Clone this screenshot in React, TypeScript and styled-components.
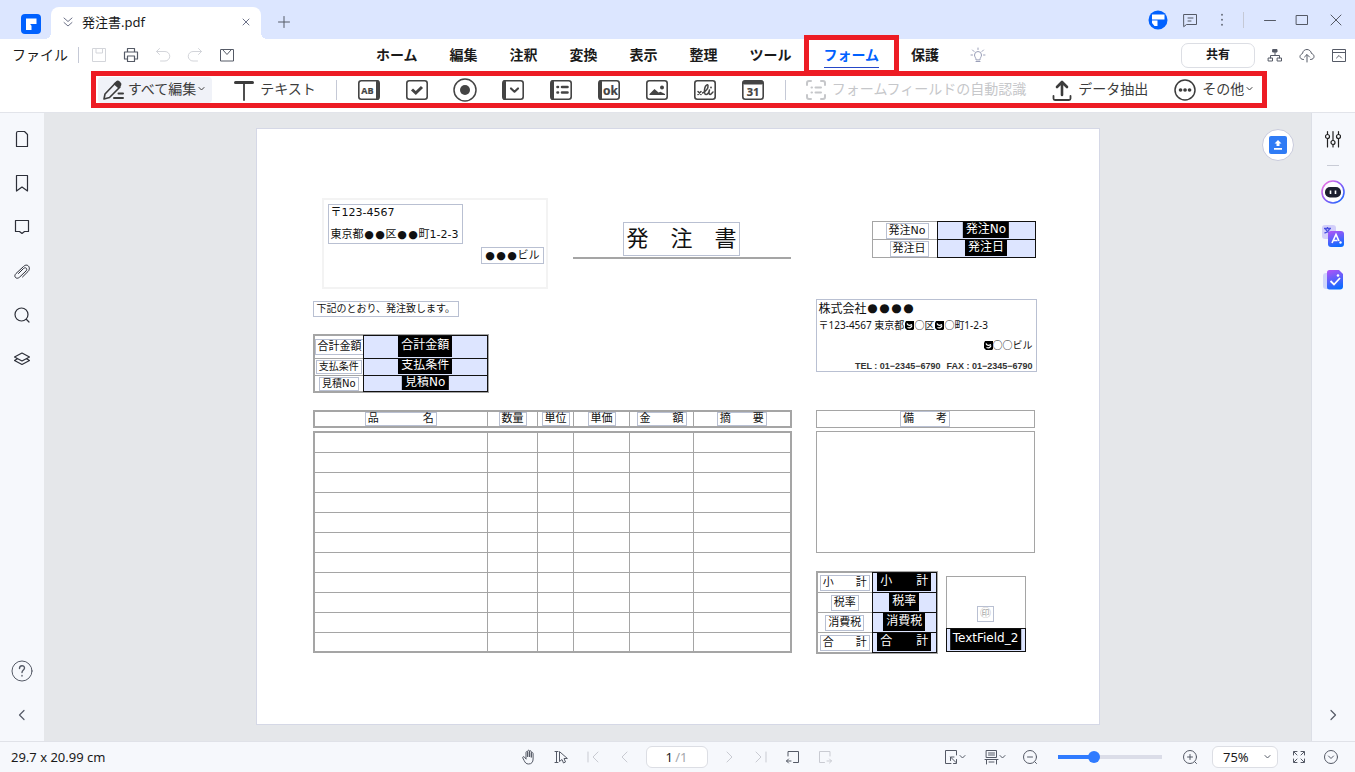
import React from 'react';
import styled, { createGlobalStyle, css } from 'styled-components';

const RED = '#ed1c24';
const BLUE = '#0061ff';
const INK = '#1a1a1a';
const RULE = '#a5a5a5';
const OUTLINE = '#b9c0d2';
const FIELD = '#dde5ff';
const ui = `"Noto Sans", "Noto Sans CJK JP", sans-serif`;
const doc = `"DejaVu Sans", "Noto Sans CJK JP", sans-serif`;
const cjk = `"Noto Sans CJK JP", sans-serif`;

const GlobalStyle = createGlobalStyle`
  *, *::before, *::after { box-sizing: border-box; }
  body { margin: 0; font-family: ${ui}; font-size: 13px; color: ${INK}; background: #f6f8fc; }
  button, input, select { font: inherit; color: inherit; }
  svg { display: block; flex: none; }
`;

const Window = styled.div`
  min-height: 100vh;
  display: flex;
  flex-direction: column;
`;

/* ---------- shared controls ---------- */

const IconButton = styled.button<{ $w?: number; $h?: number; $color?: string }>`
  display: flex;
  align-items: center;
  justify-content: center;
  flex: none;
  width: ${(p) => p.$w ?? 32}px;
  height: ${(p) => p.$h ?? 24}px;
  padding: 0;
  border: 0;
  background: none;
  color: ${(p) => p.$color ?? '#555a66'};
`;

const Divider = styled.span<{ $h?: number }>`
  flex: none;
  width: 1px;
  height: ${(p) => p.$h ?? 16}px;
  background: #c5c9d6;
`;

type SvgProps = { size?: number; w?: number; sw?: number; children: React.ReactNode };
const Svg = ({ size = 16, w, sw = 1, children }: SvgProps) => (
  <svg
    width={w ?? size}
    height={size}
    viewBox={`0 0 ${w ?? size} ${size}`}
    fill="none"
    stroke="currentColor"
    strokeWidth={sw}
    strokeLinecap="round"
    strokeLinejoin="round"
    aria-hidden="true"
  >
    {children}
  </svg>
);

/* ---------- title bar ---------- */

const TitleBar = styled.header`
  display: flex;
  align-items: flex-end;
  height: 39px;
  padding-left: 21px;
  background: #dce6ff;
`;

const AppLogo = styled.div`
  margin: 0 10px 5px 0;
`;

const FileTab = styled.div`
  position: relative;
  display: flex;
  align-items: center;
  width: 210px;
  height: 32px;
  padding: 0 10px 2px 12px;
  border-radius: 8px 8px 0 0;
  background: #fff;
  > svg { color: #6d7288; }
  &::before, &::after {
    content: '';
    position: absolute;
    bottom: 0;
    width: 6px;
    height: 6px;
  }
  &::before { left: -6px; background: radial-gradient(circle at 0 0, transparent 6px, #fff 6px); }
  &::after { right: -6px; background: radial-gradient(circle at 100% 0, transparent 6px, #fff 6px); }
`;

const FileName = styled.span`
  flex: 1;
  margin-left: 9px;
  line-height: 20px;
`;

const NewTab = styled(IconButton)`
  margin: 0 0 5px 12px;
`;

const WindowControls = styled.div`
  display: flex;
  align-items: center;
  height: 39px;
  margin-left: auto;
  padding-right: 4px;
  > ${Divider} { margin: 0 12px 0 5px; }
`;

/* ---------- menu row ---------- */

const MenuRow = styled.div`
  display: grid;
  grid-template-columns: 1fr auto 1fr;
  align-items: center;
  height: 32px;
  background: #fff;
`;

const QuickBar = styled.div`
  display: flex;
  align-items: center;
  padding-left: 12px;
`;

const FileMenu = styled.button`
  padding: 0;
  margin-right: 10px;
  border: 0;
  background: none;
  font-size: 14px;
  line-height: 20px;
`;

const QuickIcons = styled.div`
  display: flex;
  margin-left: 4px;
`;

const Tabs = styled.nav`
  display: flex;
  gap: 32px;
  height: 100%;
  padding-left: 6px;
`;

const TabButton = styled.button<{ $active?: boolean }>`
  position: relative;
  height: 100%;
  padding: 0;
  border: 0;
  background: none;
  font-size: 14px;
  font-weight: 700;
  line-height: 20px;
  ${(p) =>
    p.$active &&
    css`
      color: ${BLUE};
      &::after {
        content: '';
        position: absolute;
        left: 0;
        right: 0;
        bottom: 3px;
        height: 1px;
        background: #2547c8;
      }
    `}
`;

const TabHighlight = styled.span`
  position: absolute;
  inset: -4px -20px;
  border: 5px solid ${RED};
  pointer-events: none;
`;

const AccountBar = styled.div`
  display: flex;
  align-items: center;
  justify-content: flex-end;
`;

const ShareButton = styled.button`
  width: 74px;
  height: 25px;
  margin-right: 4px;
  padding: 0 0 2px;
  border: 1px solid #dcdee4;
  border-radius: 7px;
  background: #fff;
  font-size: 12px;
  font-weight: 700;
`;

/* ---------- form toolbar ---------- */

const ToolbarRow = styled.div`
  display: flex;
  justify-content: center;
  padding: 0 0 4px 3px;
  border-bottom: 1px solid #e2e4ea;
  background: #fff;
`;

const Toolbar = styled.div`
  display: flex;
  align-items: center;
  gap: 20px;
  height: 37px;
  padding: 0 9px 0 2px;
  border: 5px solid ${RED};
`;

const ToolGroup = styled.div<{ $gap: number }>`
  display: flex;
  align-items: center;
  gap: ${(p) => p.$gap}px;
`;

const ToolButton = styled.button<{ $selected?: boolean }>`
  display: flex;
  align-items: center;
  gap: ${(p) => (p.$selected ? 4 : 6)}px;
  height: 26px;
  padding: ${(p) => (p.$selected ? '0 7px 0 5px' : '0')};
  border: 0;
  border-radius: 4px;
  background: ${(p) => (p.$selected ? '#f0f2f8' : 'none')};
  color: #3c3c3c;
  font-size: 14px;
  line-height: 20px;
  white-space: nowrap;
  &:disabled { color: #c6c7ca; }
`;

const ToolLabel = styled.span`
  display: flex;
  align-items: center;
  gap: 2px;
  padding-bottom: 1px;
`;

/* ---------- work area ---------- */

const WorkArea = styled.main`
  flex: 1;
  display: flex;
`;

const SideRail = styled.aside<{ $right?: boolean }>`
  display: flex;
  flex-direction: column;
  align-items: center;
  flex: none;
  width: 44px;
  padding: 4px ${(p) => (p.$right ? 1 : 0)}px 4px 0;
  background: #f6f8fc;
  color: #333;
  border-left: ${(p) => (p.$right ? '1px solid #dcdfe6' : '0')};
`;

const RailSpacer = styled.div`
  flex: 1;
`;

const RailRule = styled.span`
  width: 12px;
  height: 1px;
  margin: 4px 0;
  background: #c9ccd6;
`;

const Canvas = styled.section`
  position: relative;
  flex: 1;
  display: flex;
  justify-content: center;
  align-items: flex-start;
  padding: 15px 0;
  background: #e5e7ea;
`;

const UploadButton = styled.button`
  position: absolute;
  top: 16px;
  right: 17px;
  display: flex;
  align-items: center;
  justify-content: center;
  width: 32px;
  height: 32px;
  padding: 0;
  border: 1px solid #c9cbdc;
  border-radius: 50%;
  background: #fff;
`;

/* ---------- the order form ---------- */

const Sheet = styled.article`
  display: flex;
  gap: 25px;
  width: 844px;
  min-height: 597px;
  padding: 69px 64px 64px 56px;
  border: 1px solid #d5d8e6;
  background: #fff;
  color: #111;
  font-family: ${doc};
  font-size: 11px;
  line-height: 14px;
`;

const LeftColumn = styled.div`
  flex: 1;
  display: flex;
  flex-direction: column;
  min-width: 0;
`;

const RightColumn = styled.div`
  display: flex;
  flex-direction: column;
  flex: none;
  width: 219px;
  padding-top: 23px;
`;

const SheetHead = styled.div`
  display: flex;
  justify-content: space-between;
  align-items: flex-start;
  padding-left: 9px;
`;

const AddressFrame = styled.div`
  display: flex;
  flex-direction: column;
  width: 226px;
  height: 91px;
  padding: 4px 2px 4px 4px;
  border: 2px solid #f3f3f3;
`;

const TextBlock = styled.div`
  width: fit-content;
  border: 1px solid ${OUTLINE};
  white-space: nowrap;
`;

const Recipient = styled(TextBlock)`
  padding: 1px 4px 1px 2px;
  p { margin: 0 0 8px; }
  p:last-child { margin: 0; }
`;

const Building = styled(TextBlock)`
  align-self: flex-end;
  margin-top: 3px;
  padding: 0 3px;
  line-height: 15px;
`;

const Mark = styled.span`
  font-family: ${cjk};
`;

/* a solid circle centred in a full-width cell */
const Dot = styled.span`
  display: inline-block;
  width: 1em;
  text-align: center;
  font-family: ${doc};
`;

const TitleRule = styled.div`
  display: flex;
  justify-content: center;
  width: 218px;
  margin-top: 24px;
  padding-bottom: 1px;
  border-bottom: 2px solid ${RULE};
`;

const SheetTitle = styled.h1`
  margin: 0;
  padding: 0 2px;
  border: 1px solid ${OUTLINE};
  font-size: 22px;
  font-weight: 400;
  line-height: 32px;
  white-space: nowrap;
`;

const Notice = styled(TextBlock)`
  margin: 12px 0 17px;
  padding: 0 3px;
  font-size: 10px;
`;

const FieldTable = styled.table<{ $width: number; $line?: number; $indent?: number }>`
  width: ${(p) => p.$width}px;
  margin-left: ${(p) => p.$indent ?? 0}px;
  table-layout: fixed;
  border-collapse: collapse;
  border: ${(p) => p.$line ?? 1}px solid ${RULE};
`;

const LabelCell = styled.th<{ $h: number; $end?: boolean }>`
  height: ${(p) => p.$h}px;
  padding: 0 ${(p) => (p.$end ? 8 : 0)}px 0 0;
  border: 1px solid ${RULE};
  font-weight: 400;
  text-align: ${(p) => (p.$end ? 'right' : 'center')};
  vertical-align: middle;
  line-height: 0;
`;

const Caption = styled.label<{ $small?: boolean; $tight?: boolean }>`
  display: inline-block;
  padding: 0 2px;
  border: 1px solid ${OUTLINE};
  font-size: ${(p) => (p.$small ? 10 : 11)}px;
  line-height: ${(p) => (p.$small || p.$tight ? 12 : 14)}px;
  white-space: pre;
  vertical-align: middle;
`;

const FieldCell = styled.td<{ $h: number }>`
  height: ${(p) => p.$h}px;
  padding: 0;
  border: 1px solid #000;
`;

const FieldFrame = styled.div<{ $h: number }>`
  position: relative;
  height: ${(p) => p.$h}px;
  box-shadow: 0 0 0 1px #111;
`;

const FieldInput = styled.input`
  display: block;
  width: 100%;
  height: 100%;
  padding: 0;
  border: 0;
  border-radius: 0;
  background: ${FIELD};
`;

const FieldTag = styled.span`
  position: absolute;
  top: 0;
  bottom: 1px;
  left: 50%;
  display: flex;
  align-items: center;
  padding: 0 3px 3px;
  overflow: hidden;
  background: #000;
  color: #fff;
  font-size: 12px;
  line-height: 14px;
  white-space: pre;
  transform: translateX(-50%);
  pointer-events: none;
`;

const ItemTable = styled.table`
  width: 478px;
  table-layout: fixed;
  border-collapse: collapse;
  border: 2px solid ${RULE};
  th, td {
    padding: 0;
    border: 1px solid ${RULE};
    font-weight: 400;
  }
  th { height: 16px; line-height: 0; }
  td { height: 20px; }
  ${FieldTable} + & { margin-top: 17px; }
  & + & { margin-top: 3px; }
`;

const Company = styled.div`
  width: 221px;
  margin: 41px 0 38px;
  padding: 1px 3px 0 2px;
  border: 1px solid ${OUTLINE};
  font-family: ${ui};
  font-size: 10px;
  line-height: 12px;
  white-space: nowrap;
  p { margin: 0; display: flex; align-items: center; }
`;

const CompanyName = styled.p`
  font-size: 12px;
  line-height: 15px;
`;

const CompanyLine = styled.p<{ $end?: boolean }>`
  && { margin-top: ${(p) => (p.$end ? 8 : 3)}px; }
  justify-content: ${(p) => (p.$end ? 'flex-end' : 'flex-start')};
`;

const Phone = styled.p`
  && { margin-top: 11px; }
  justify-content: flex-end;
  gap: 6px;
  color: #333;
  font-family: "Liberation Sans", ${cjk};
  font-size: 9px;
  font-weight: 700;
  line-height: 9px;
`;

const RemarksHead = styled.div`
  display: flex;
  justify-content: center;
  height: 18px;
  border: 1px solid ${RULE};
`;

const Remarks = styled.textarea`
  display: block;
  width: 100%;
  height: 122px;
  margin: 3px 0 18px;
  border: 1px solid ${RULE};
  border-radius: 0;
  background: #fff;
  resize: none;
`;

const Summary = styled.div`
  display: flex;
  gap: 8px;
`;

const Stamp = styled.div`
  flex: none;
  width: 80px;
  margin-top: 5px;
`;

const StampArea = styled.div`
  display: flex;
  justify-content: center;
  align-items: flex-end;
  height: 52px;
  padding-bottom: 6px;
  border: 1px solid ${RULE};
  border-bottom: 0;
  color: #aaa;
  font-size: 10px;
  line-height: 16px;
`;

const StampField = styled.div`
  height: 24px;
  padding: 1px;
`;

/* ---------- status bar ---------- */

const StatusBar = styled.footer`
  display: grid;
  grid-template-columns: 1fr auto 1fr;
  align-items: center;
  height: 31px;
  padding: 0 8px 0 11px;
  border-top: 1px solid #e0e2e8;
  background: #f6f8fc;
`;

const StatusGroup = styled.div<{ $end?: boolean }>`
  display: flex;
  align-items: center;
  justify-content: ${(p) => (p.$end ? 'flex-end' : 'center')};
  margin-right: ${(p) => (p.$end ? 0 : 4)}px;
`;

const PageBox = styled.label`
  display: flex;
  align-items: center;
  width: 62px;
  height: 22px;
  margin: 0 5px;
  border: 1px solid #dcdee4;
  border-radius: 6px;
  background: #fff;
  color: #a4a6ac;
`;

const PageInput = styled.input`
  width: 26px;
  padding: 0;
  border: 0;
  background: none;
  color: ${INK};
  text-align: right;
`;

const ZoomRange = styled.input`
  appearance: none;
  width: 104px;
  height: 12px;
  margin: 0 12px;
  background: linear-gradient(to right, #2f7bff 36px, #dbdde8 36px) center / 100% 4px no-repeat;
  &::-webkit-slider-thumb {
    appearance: none;
    width: 12px;
    height: 12px;
    border-radius: 50%;
    background: #2f7bff;
  }
`;

const ZoomBox = styled.div`
  position: relative;
  margin: 0 5px 0 6px;
  svg { position: absolute; top: 8px; right: 7px; color: #555a66; pointer-events: none; }
`;

const ZoomSelect = styled.select`
  appearance: none;
  display: block;
  width: 66px;
  height: 22px;
  padding: 0 0 0 10px;
  border: 1px solid #dcdee4;
  border-radius: 6px;
  background: #fff;
`;

/* ---------- glyphs ---------- */

const Caret = ({ w = 7 }: { w?: number }) => (
  <Svg size={6} w={w}>
    <path d={`M1 1.500 L${w / 2} 4 L${w - 1} 1.500`} />
  </Svg>
);

const Logo = () => (
  <svg width="20" height="20" viewBox="0 0 20 20" aria-hidden="true">
    <rect width="20" height="20" rx="4" fill="#0061ff" />
    <path d="M5 4.500h10.500v5.500H10v1.500H5z M5 11.500h5.500v4.500H5z" fill="#fff" />
    <path d="M9.500 10.500h6" stroke="#0061ff" />
  </svg>
);

const RoundLogo = () => (
  <svg width="20" height="20" viewBox="0 0 20 20" aria-hidden="true">
    <circle cx="10" cy="10" r="9.500" fill="#0061ff" />
    <path d="M4 4.500h12.500v5H4z M4 10.500h5.500v5.500H6.500L4 13z" fill="#fff" />
  </svg>
);

const ToolFrame = ({ children, bar }: { children: React.ReactNode; bar?: 'left' | 'right' | 'top' }) => (
  <svg width="24" height="24" viewBox="0 0 24 24" fill="none" stroke="#444" strokeWidth="1.600" strokeLinecap="round" strokeLinejoin="round" aria-hidden="true">
    <rect x="1.800" y="2.800" width="20.400" height="18.400" rx="2.500" />
    {bar === 'left' && <path d="M3.500 3.500v17" strokeWidth="3" />}
    {bar === 'right' && <path d="M20.500 3.500v17" strokeWidth="3" />}
    {bar === 'top' && <path d="M3.500 4.500h17" strokeWidth="4" />}
    {children}
  </svg>
);

const svgText = { fill: '#444', stroke: '#444', strokeWidth: 0.2, fontWeight: 700, textAnchor: 'middle' as const };

const fieldTools: { name: string; icon: React.ReactNode }[] = [
  {
    name: 'テキストフィールド',
    icon: (
      <ToolFrame bar="right">
        <text x="10.500" y="15.500" fontSize="9" fontFamily="Open Sans, sans-serif" {...svgText}>AB</text>
      </ToolFrame>
    ),
  },
  { name: 'チェックボックス', icon: <ToolFrame><path d="M7 11.500l3.800 3.500 6.200-6" strokeWidth="3" strokeLinecap="butt" strokeLinejoin="miter" /></ToolFrame> },
  {
    name: 'ラジオボタン',
    icon: (
      <svg width="24" height="24" viewBox="0 0 24 24" aria-hidden="true">
        <circle cx="12" cy="12" r="11" fill="none" stroke="#444" strokeWidth="1.500" />
        <circle cx="12" cy="12" r="5" fill="#444" />
      </svg>
    ),
  },
  { name: 'コンボボックス', icon: <ToolFrame bar="left"><path d="M10 10.500l3.500 3.200 3.500-3.200" strokeWidth="2.200" /></ToolFrame> },
  { name: 'リストボックス', icon: <ToolFrame bar="left"><path d="M8.500 9h.5M13 9h5.500M8.500 14.500h.5M13 14.500h5.500" strokeWidth="2.600" /></ToolFrame> },
  {
    name: 'プッシュボタン',
    icon: (
      <ToolFrame bar="left">
        <text x="13.500" y="16.500" fontSize="12" fontFamily="Open Sans, sans-serif" {...svgText}>ok</text>
      </ToolFrame>
    ),
  },
  {
    name: '画像フィールド',
    icon: (
      <ToolFrame>
        <path d="M4.500 17v-1l5-5 4 3.500 2-.8 4.500 2.300v1z" fill="#444" stroke="none" />
        <circle cx="17" cy="9.500" r="2" fill="#444" stroke="none" />
      </ToolFrame>
    ),
  },
  {
    name: '署名フィールド',
    icon: (
      <ToolFrame>
        <path d="M5 13.500l3 3M8 13.500l-3 3" strokeWidth="1.500" />
        <path d="M9.500 15c3.500-1.500 6-5 5.500-7.500-.3-1.500-2.500-.5-3.200 2.500-.8 3.500-.3 6.500 1.200 6.500s3-2.500 3.500-4.500c-.8 2.500-.5 4.500.5 4.500s1.800-1.500 3-2.500" strokeWidth="1.500" />
        <path d="M18 9.500v.1" strokeWidth="1.800" />
      </ToolFrame>
    ),
  },
  {
    name: '日付フィールド',
    icon: (
      <ToolFrame bar="top">
        <text x="12" y="18" fontSize="11" fontFamily="Open Sans, sans-serif" {...svgText}>31</text>
      </ToolFrame>
    ),
  },
];

const leftRail: { name: string; icon: React.ReactNode }[] = [
  { name: 'ページ', icon: <path d="M4 1.500h6.500l3 3v12H2.500V3A1.500 1.500 0 0 1 4 1.500z" /> },
  { name: 'しおり', icon: <path d="M2.500 1.500h11v15.500L8 13l-5.500 4z" /> },
  { name: '注釈', icon: <path d="M1.500 2.500h13v11h-4L8 15.500l-2.500-2h-4z" /> },
  { name: '添付ファイル', icon: <path d="M8.500 15L14 9.500C17.500 6 13.500 .5 9.500 4.500L2 11.500c-3 3 .5 6.500 3.500 3.700L12 9c2-2-.3-4.500-2.500-2.500L4.500 11.500" strokeWidth="1" /> },
  { name: '検索', icon: <path d="M7.500 2a6.500 6.500 0 1 1 0 13a6.500 6.500 0 1 1 0-13zM12.500 13.500l2.500 2.500" /> },
  { name: 'レイヤー', icon: <path d="M8 3l7.500 4L8 11 .5 7zM3 9L.5 10.500 8 14.500l7.500-4L13 9" /> },
];

const tabs = ['ホーム', '編集', '注釈', '変換', '表示', '整理', 'ツール', 'フォーム', '保護'];

const columnWidths = [174, 50, 36, 56, 64, 97];
const columnNames = ['品　　　　名', '数量', '単位', '単価', '金　　額', '摘　　要'];

const Cols = ({ widths }: { widths: number[] }) => (
  <colgroup>
    {widths.map((w, i) => (
      <col key={i} width={w} />
    ))}
  </colgroup>
);

const Dots = ({ n }: { n: number }) => (
  <>
    {Array.from({ length: n }, (_, i) => (
      <Dot key={i}>●</Dot>
    ))}
  </>
);

type Row = { id: string; label: string; h: number; small?: boolean };

const FieldRows = ({ rows, end }: { rows: Row[]; end?: boolean }) => (
  <tbody>
    {rows.map((r) => (
      <tr key={r.id}>
        <LabelCell scope="row" $h={r.h} $end={end}>
          <Caption htmlFor={r.id} $small={r.small}>{r.label}</Caption>
        </LabelCell>
        <FieldCell $h={r.h}>
          <FieldFrame $h={r.h - 1}>
            <FieldInput id={r.id} />
            <FieldTag>{r.label}</FieldTag>
          </FieldFrame>
        </FieldCell>
      </tr>
    ))}
  </tbody>
);

const Smudge = () => (
  <svg width="10" height="11" viewBox="0 0 10 11" aria-hidden="true">
    <path d="M2 1h8v8l-1 1H3L1 8V3z" fill="#000" />
    <path d="M3 3.500c1 2.500 3 2 5 1M3.500 7.500c2 1 4 0 4.500-2" stroke="#fff" strokeWidth="1.200" fill="none" />
  </svg>
);

const OrderForm = () => (
  <Sheet>
    <LeftColumn>
      <SheetHead>
        <AddressFrame>
          <Recipient>
            <p>〒123-4567</p>
            <p>東京都<Dots n={2} />区<Dots n={2} />町1-2-3</p>
          </Recipient>
          <Building><Dots n={3} />ビル</Building>
        </AddressFrame>
        <TitleRule>
          <SheetTitle>発　注　書</SheetTitle>
        </TitleRule>
      </SheetHead>
      <Notice>下記のとおり、発注致します。</Notice>
      <FieldTable $width={175} $line={2}>
        <Cols widths={[50, 124]} />
        <FieldRows
          rows={[
            { id: 'amount', label: '合計金額', h: 23 },
            { id: 'terms', label: '支払条件', h: 17, small: true },
            { id: 'quote', label: '見積No', h: 16, small: true },
          ]}
        />
      </FieldTable>
      <ItemTable>
        <Cols widths={columnWidths} />
        <thead>
          <tr>
            {columnNames.map((n) => (
              <th key={n} scope="col"><Caption as="span" $tight>{n}</Caption></th>
            ))}
          </tr>
        </thead>
      </ItemTable>
      <ItemTable>
        <Cols widths={columnWidths} />
        <tbody>
          {Array.from({ length: 11 }, (_, r) => (
            <tr key={r}>
              {columnWidths.map((_, c) => (
                <td key={c} />
              ))}
            </tr>
          ))}
        </tbody>
      </ItemTable>
    </LeftColumn>
    <RightColumn>
      <FieldTable $width={163} $indent={56}>
        <Cols widths={[65, 98]} />
        <FieldRows
          end
          rows={[
            { id: 'orderNo', label: '発注No', h: 18 },
            { id: 'orderDate', label: '発注日', h: 18 },
          ]}
        />
      </FieldTable>
      <Company>
        <CompanyName>株式会社<Dots n={4} /></CompanyName>
        <CompanyLine>
          〒123-4567&nbsp;東京都<Smudge /><Mark>○</Mark>区<Smudge /><Mark>○</Mark>町1-2-3
        </CompanyLine>
        <CompanyLine $end><Smudge /><Mark>○○</Mark>ビル</CompanyLine>
        <Phone>
          <span>TEL : 01−2345−6790</span>
          <span>FAX : 01−2345−6790</span>
        </Phone>
      </Company>
      <RemarksHead>
        <Caption htmlFor="remarks">備　　考</Caption>
      </RemarksHead>
      <Remarks id="remarks" />
      <Summary>
        <FieldTable $width={122} $line={2}>
          <Cols widths={[56, 64]} />
          <FieldRows
            rows={[
              { id: 'subtotal', label: '小　　計', h: 20 },
              { id: 'rate', label: '税率', h: 20 },
              { id: 'tax', label: '消費税', h: 20 },
              { id: 'total', label: '合　　計', h: 20 },
            ]}
          />
        </FieldTable>
        <Stamp>
          <StampArea><Caption as="span">㊞</Caption></StampArea>
          <StampField>
            <FieldFrame $h={22}>
              <FieldInput aria-label="TextField_2" />
              <FieldTag>TextField_2</FieldTag>
            </FieldFrame>
          </StampField>
        </Stamp>
      </Summary>
    </RightColumn>
  </Sheet>
);

export default function App() {
  return (
    <Window>
      <GlobalStyle />
      <TitleBar>
        <AppLogo><Logo /></AppLogo>
        <FileTab>
          <Svg size={12} w={10}><path d="M1 2l4 3.500L9 2M1 6.500L5 10l4-3.500" /></Svg>
          <FileName>発注書.pdf</FileName>
          <IconButton $w={10} $color="#6d7288" aria-label="タブを閉じる"><Svg size={8}><path d="M1 1l6 6M7 1L1 7" /></Svg></IconButton>
        </FileTab>
        <NewTab $w={22} aria-label="新しいタブ"><Svg size={12}><path d="M6 .5v11M.5 6h11" /></Svg></NewTab>
        <WindowControls>
          <IconButton aria-label="アカウント"><RoundLogo /></IconButton>
          <IconButton aria-label="フィードバック"><Svg><path d="M2 2.500h12.500v10H4.500L2 14.500zM6 6h5M6 9h3" /></Svg></IconButton>
          <IconButton aria-label="メニュー"><Svg><path d="M8 2.500v.500M8 7.500v.500M8 12.500v.500" strokeWidth="1.600" /></Svg></IconButton>
          <Divider $h={16} />
          <IconButton $w={28} aria-label="最小化"><Svg><path d="M2.500 8.500h11" /></Svg></IconButton>
          <IconButton $w={36} aria-label="最大化"><Svg size={14}><path d="M1.500 2.500h11v9h-11z" /></Svg></IconButton>
          <IconButton $w={31} aria-label="閉じる"><Svg size={12}><path d="M1 1l10 10M11 1L1 11" /></Svg></IconButton>
        </WindowControls>
      </TitleBar>

      <MenuRow>
        <QuickBar>
          <FileMenu>ファイル</FileMenu>
          <Divider />
          <QuickIcons>
            <IconButton $color="#d3d5da" aria-label="保存"><Svg><path d="M2 1.500h12.500v13h-13V2zM5 1.500V6h6.500V1.500" /></Svg></IconButton>
            <IconButton aria-label="印刷"><Svg sw={1.2}><path d="M4.500 5V1.500h7V5M4 12H1.500V5h13v7H12M4.500 9h7v5.500h-7z" /></Svg></IconButton>
            <IconButton $color="#d3d5da" aria-label="元に戻す"><Svg><path d="M4.500 1.500l-3 3 3 3M1.500 4.500H10a4.500 4.500 0 0 1 0 9.500H5.500" /></Svg></IconButton>
            <IconButton $color="#d3d5da" aria-label="やり直す"><Svg><path d="M11.500 1.500l3 3-3 3M14.500 4.500H6a4.500 4.500 0 0 0 0 9.500h4.500" /></Svg></IconButton>
            <IconButton aria-label="メール"><Svg><path d="M2 2.500h12.500v11.500h-13V3zM4 3l4 4.500L12 3" /></Svg></IconButton>
          </QuickIcons>
        </QuickBar>
        <Tabs>
          {tabs.map((t) => (
            <TabButton key={t} $active={t === 'フォーム'}>
              {t}
              {t === 'フォーム' && <TabHighlight />}
            </TabButton>
          ))}
          <IconButton $w={14} $h={32} $color="#9a9fb8" aria-label="ヒント">
            <Svg size={16}><path d="M6 12.500C6 10.500 4.500 10 4.500 8a3.500 3.500 0 0 1 7 0c0 2-1.500 2.500-1.500 4.500zM6 14.500h4M8 1v1.500M2.500 3l1.500 1.500M13.500 3L12 4.500M1 8h1.500M13.500 8H15" /></Svg>
          </IconButton>
        </Tabs>
        <AccountBar>
          <ShareButton>共有</ShareButton>
          <IconButton aria-label="組織"><Svg><path d="M6 2.500h4v2.500H6z" fill="currentColor" /><path d="M8 5v3.500M3.500 11V8.500h9V11M1.500 11h4v3h-4zM10.500 11h4v3h-4z" /></Svg></IconButton>
          <IconButton aria-label="クラウド"><Svg><path d="M4.500 12.500C2 12.500 1 11 1 9.500S2.500 7 3.500 6.500C4 3.500 6 2.500 8 2.500s4 1.500 4.500 4c1.500.5 2.500 1.500 2.500 3s-1 3-3.500 3M8 15V8M5.500 10L8 7.500l2.500 2.500" /></Svg></IconButton>
          <IconButton aria-label="折りたたむ"><Svg><path d="M2 2.500h12.500v12h-13V3zM1.500 5.500h13M5.500 11L8 8.500l2.500 2.500" /></Svg></IconButton>
        </AccountBar>
      </MenuRow>

      <ToolbarRow>
        <Toolbar>
          <ToolGroup $gap={22}>
            <ToolButton $selected>
              <Svg size={22} w={21} sw={1.6}>
                <path d="M1 20l1-5L12.500 4l4.500 4L6.500 18.500z" />
                <path d="M11.500 5L14 2.500c1-1 4.500 2 3.500 3.500L15.500 8.500z" fill="currentColor" />
                <path d="M15.500 14.500H20M11 19h9" strokeWidth="2" />
              </Svg>
              <ToolLabel>すべて編集<Caret /></ToolLabel>
            </ToolButton>
            <ToolButton>
              <Svg size={22} w={20}><path d="M1.500 3.500h17" strokeWidth="3" /><path d="M10 4v17" strokeWidth="1.800" /></Svg>
              <ToolLabel>テキスト</ToolLabel>
            </ToolButton>
          </ToolGroup>
          <Divider $h={20} />
          <ToolGroup $gap={24}>
            {fieldTools.map((t) => (
              <IconButton key={t.name} $w={24} aria-label={t.name}>{t.icon}</IconButton>
            ))}
          </ToolGroup>
          <Divider $h={20} />
          <ToolGroup $gap={26}>
            <ToolButton disabled>
              <Svg size={20} sw={2}>
                <path d="M1 5V3a2 2 0 0 1 2-2h2M15 1h2a2 2 0 0 1 2 2v2M19 15v2a2 2 0 0 1-2 2h-2M5 19H3a2 2 0 0 1-2-2v-2M5.500 7.500h.5M9.500 7.500H15M5.500 12.500h.5M9.500 12.500H15" />
              </Svg>
              <ToolLabel>フォームフィールドの自動認識</ToolLabel>
            </ToolButton>
            <ToolButton>
              <Svg size={22} w={20} sw={1.8}><path d="M1.500 17v2.500a1.500 1.500 0 0 0 1.500 1.500h14a1.500 1.500 0 0 0 1.500-1.500V17" /><path d="M10 16V3.500M5 8l5-5 5 5" strokeWidth="2.600" /></Svg>
              <ToolLabel>データ抽出</ToolLabel>
            </ToolButton>
            <ToolButton>
              <Svg size={22} sw={1.5}><circle cx="11" cy="11" r="10" /><path d="M6.500 11h.1M11 11h.1M15.500 11h.1" strokeWidth="3.600" /></Svg>
              <ToolLabel>その他<Caret /></ToolLabel>
            </ToolButton>
          </ToolGroup>
        </Toolbar>
      </ToolbarRow>

      <WorkArea>
        <SideRail>
          {leftRail.map((r) => (
            <IconButton key={r.name} $w={44} $h={44} $color="#2c2f38" aria-label={r.name}>
              <Svg size={18} w={16} sw={1.2}>{r.icon}</Svg>
            </IconButton>
          ))}
          <RailSpacer />
          <IconButton $w={44} $h={44} aria-label="ヘルプ">
            <Svg size={22}><circle cx="11" cy="11" r="10" /><path d="M8.500 8.500c0-3.500 5-3.500 5-.5 0 2-2.500 2-2.500 4.500M11 15.500v.5" strokeWidth="1.400" /></Svg>
          </IconButton>
          <IconButton $w={44} $h={44} aria-label="前へ"><Svg size={12}><path d="M8 1.500L3.500 6 8 10.500" strokeWidth="1.200" /></Svg></IconButton>
        </SideRail>

        <Canvas>
          <OrderForm />
          <UploadButton aria-label="アップロード">
            <svg width="18" height="18" viewBox="0 0 18 18" aria-hidden="true">
              <rect width="18" height="18" rx="2" fill="#2f7bf5" />
              <path d="M9 4l3.500 3.500h-2V10h-3V7.500h-2zM5 12h8v1.800H5z" fill="#fff" />
            </svg>
          </UploadButton>
        </Canvas>

        <SideRail $right>
          <IconButton $w={42} $h={44} $color="#222" aria-label="プロパティ">
            <Svg size={18} w={16} sw={1.2}><path d="M2.500 1.500v3M2.500 8.500V17M8 1.500v9M8 14.500V17M13.500 1.500v3M13.500 8.500V17" /><circle cx="2.500" cy="6.500" r="2" /><circle cx="8" cy="12.500" r="2" /><circle cx="13.500" cy="6.500" r="2" /></Svg>
          </IconButton>
          <RailRule />
          <IconButton $w={42} $h={44} aria-label="AIアシスタント">
            <svg width="24" height="24" viewBox="0 0 24 24" aria-hidden="true">
              <defs><linearGradient id="ring" x1="0" y1="0" x2="1" y2="1"><stop offset="0" stopColor="#ff7ae0" /><stop offset=".5" stopColor="#8a5cf6" /><stop offset="1" stopColor="#0a6cff" /></linearGradient></defs>
              <circle cx="12" cy="12" r="11" fill="#fff" stroke="url(#ring)" strokeWidth="1.600" />
              <rect x="4" y="7" width="16" height="10.500" rx="5" fill="#1c1f2e" />
              <path d="M9.500 10.500v3.500M14.500 10.500v3.500" stroke="#fff" strokeWidth="1.600" />
            </svg>
          </IconButton>
          <IconButton $w={42} $h={44} aria-label="翻訳">
            <svg width="24" height="24" viewBox="0 0 24 24" aria-hidden="true">
              <defs><linearGradient id="tile" x1=".3" y1="0" x2=".6" y2="1"><stop offset="0" stopColor="#a855f7" /><stop offset="1" stopColor="#0a6cff" /></linearGradient></defs>
              <rect x="1" y="1" width="14" height="14" rx="3" fill="#d3cffa" />
              <path d="M3 4.500h7M6.500 3v1.500M4.500 5c1 2.500 2.500 3.500 4.500 4M8.500 5C7.500 7.500 6 8.500 3.500 9" stroke="#4a4fe0" strokeWidth="1.300" fill="none" />
              <rect x="7" y="7" width="16" height="16" rx="3" fill="url(#tile)" />
              <path d="M11 19l4-8.500L18 17M12.500 16.500h4" stroke="#fff" strokeWidth="1.600" fill="none" />
              <circle cx="19.500" cy="18.500" r="1.200" fill="#fff" />
            </svg>
          </IconButton>
          <IconButton $w={42} $h={44} aria-label="校正">
            <svg width="24" height="24" viewBox="0 0 24 24" aria-hidden="true">
              <rect x="2" y="5" width="12" height="16" rx="3" fill="#d0d6fb" />
              <path d="M8.500 2H18l4 4v12.500a3 3 0 0 1-3 3H8.500a2.500 2.500 0 0 1-2.500-2.500V4.500A2.500 2.500 0 0 1 8.500 2z" fill="url(#tile)" />
              <path d="M9.500 13l3.500 3.500L19 10" stroke="#fff" strokeWidth="1.800" fill="none" />
              <circle cx="17" cy="7.500" r="1.300" fill="#fff" />
            </svg>
          </IconButton>
          <RailSpacer />
          <IconButton $w={42} $h={44} aria-label="次へ"><Svg size={12}><path d="M4 1.500L8.500 6 4 10.500" strokeWidth="1.200" /></Svg></IconButton>
        </SideRail>
      </WorkArea>

      <StatusBar>
        <span>29.7 x 20.99 cm</span>
        <StatusGroup>
          <IconButton aria-label="手のひら"><Svg><path d="M5 9.500V3.500c0-1.300 1.700-1.300 1.700 0V7.500M6.700 7.500V2.200c0-1.300 1.800-1.300 1.800 0V7.500M8.500 7.500V2.700c0-1.300 1.800-1.300 1.800 0V8M10.300 8V4.500c0-1.300 1.800-1.300 1.800 0V10c0 3-1.500 5-4.500 5-2.600 0-3.500-1.500-4.500-3.500L1.800 9c-.5-1.500 1-1.800 1.700-.8L5 10" /></Svg></IconButton>
          <IconButton aria-label="選択"><Svg><path d="M2 2.500h3M2 13.500h3M3.500 2.500v11M6.500 3v9.500l2.500-2 1.500 3.500 2-1-1.500-3.500H14z" /></Svg></IconButton>
          <IconButton $color="#c9cbd2" aria-label="最初のページ"><Svg><path d="M3 3v10M13 3L8 8l5 5" /></Svg></IconButton>
          <IconButton $color="#c9cbd2" aria-label="前のページ"><Svg><path d="M10 3L5 8l5 5" /></Svg></IconButton>
          <PageBox><PageInput defaultValue="1" aria-label="ページ番号" /><span>&thinsp;/1</span></PageBox>
          <IconButton $color="#c9cbd2" aria-label="次のページ"><Svg><path d="M6 3l5 5-5 5" /></Svg></IconButton>
          <IconButton $color="#c9cbd2" aria-label="最後のページ"><Svg><path d="M13 3v10M3 3l5 5-5 5" /></Svg></IconButton>
          <IconButton aria-label="前の表示"><Svg><path d="M3 7V2.500h10.500v11H8.500M6 12H1.500M3.500 10l-2 2 2 2" /></Svg></IconButton>
          <IconButton $color="#c9cbd2" aria-label="次の表示"><Svg><path d="M13 7V2.500H2.500v11h5M10 12h4.500M12.500 10l2 2-2 2" /></Svg></IconButton>
        </StatusGroup>
        <StatusGroup $end>
          <IconButton $w={40} aria-label="表示サイズ"><Svg><path d="M8 14.500H2.500v-13h11V6M13 13.500L7.500 8M7.500 11.500V8H11M13.500 10.500v4h-3" /></Svg><Caret /></IconButton>
          <IconButton $w={40} aria-label="ページレイアウト"><Svg><path d="M3.500 1.500h10v7h-10zM5.500 4h6M5.500 6h6M2 10.500h13M3.500 11v4M13.500 11v4M6 13h5" /></Svg><Caret /></IconButton>
          <IconButton aria-label="縮小"><Svg><circle cx="8" cy="8" r="6.500" /><path d="M5.500 8h5M13 13l1.500 1.500" /></Svg></IconButton>
          <ZoomRange type="range" min={0} max={1000} defaultValue={326} aria-label="ズーム" />
          <IconButton aria-label="拡大"><Svg><circle cx="8" cy="8" r="6.500" /><path d="M5.500 8h5M8 5.500v5M13 13l1.500 1.500" /></Svg></IconButton>
          <ZoomBox>
            <ZoomSelect defaultValue="75%" aria-label="倍率">
              <option>75%</option>
              <option>100%</option>
            </ZoomSelect>
            <Caret />
          </ZoomBox>
          <IconButton aria-label="全画面"><Svg size={14}><path d="M1.500 5V1.500H5M9 1.500h3.500V5M12.500 9v3.500H9M5 12.500H1.500V9M2 2l3 3M12 2L9 5M12 12L9 9M2 12l3-3" /></Svg></IconButton>
          <IconButton aria-label="その他の表示"><Svg><circle cx="8" cy="8" r="6.500" /><path d="M5.500 7L8 9.500 10.500 7" /></Svg></IconButton>
        </StatusGroup>
      </StatusBar>
    </Window>
  );
}
